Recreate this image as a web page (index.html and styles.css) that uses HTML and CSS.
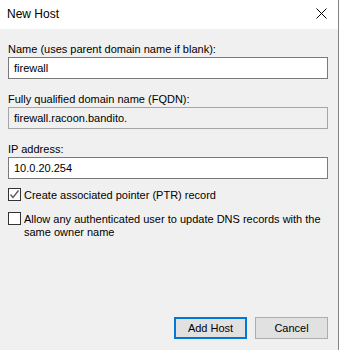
FILE: index.html
```html
<!DOCTYPE html>
<html>
<head>
<meta charset="utf-8">
<link rel="stylesheet" href="styles.css">
</head>
<body>
<div class="window">
  <div class="titlebar">
    <span class="title">New Host</span>
    <svg class="close" width="11" height="11" viewBox="0 0 11 11"><path d="M0.5 0.5L10.5 10.5M10.5 0.5L0.5 10.5" stroke="#000" stroke-width="1" fill="none"/></svg>
  </div>
  <div class="content">
    <div class="field">
      <div class="label">Name (uses parent domain name if blank):</div>
      <div class="textbox">firewall</div>
    </div>
    <div class="field">
      <div class="label">Fully qualified domain name (FQDN):</div>
      <div class="textbox readonly">firewall.racoon.bandito.</div>
    </div>
    <div class="field">
      <div class="label">IP address:</div>
      <div class="textbox">10.0.20.254</div>
    </div>
    <div class="check first">
      <span class="box checked"><svg width="11" height="11" viewBox="0 0 11 11"><path d="M1.5 5.5L4 8.5L9.5 1.5" stroke="#555" stroke-width="1.3" fill="none"/></svg></span>
      <span class="ctext">Create associated pointer (PTR) record</span>
    </div>
    <div class="check second">
      <span class="box"></span>
      <span class="ctext">Allow any authenticated user to update DNS records with the same owner name</span>
    </div>
    <div class="spacer"></div>
    <div class="buttons">
      <div class="btn default">Add Host</div>
      <div class="btn">Cancel</div>
    </div>
  </div>
</div>
</body>
</html>
```
FILE: styles.css
```css
html, body {
  margin: 0;
  padding: 0;
  background: #ffffff;
}
body {
  width: 340px;
  height: 350px;
  overflow: hidden;
  font-family: "Liberation Sans", Arial, sans-serif;
  font-size: 11px;
  color: #000;
}
.window {
  width: 338px;
  height: 350px;
  border-right: 1px solid #838383;
  background: #f0f0f0;
  display: flex;
  flex-direction: column;
}
.titlebar {
  height: 29px;
  background: #ffffff;
  display: flex;
  align-items: center;
  justify-content: space-between;
  padding: 0 11px 0 7px;
  box-sizing: border-box;
}
.title {
  font-size: 12px;
  margin-top: -1px;
}
.close {
  display: block;
  margin-top: -2px;
}
.content {
  flex: 1;
  display: flex;
  flex-direction: column;
  padding: 12px 10px 11px 8px;
}
.field {
  display: flex;
  flex-direction: column;
  margin-bottom: 12px;
}
.label {
  height: 16px;
  line-height: 16px;
}
.textbox {
  height: 22px;
  box-sizing: border-box;
  border: 1px solid #7a7a7a;
  background: #fff;
  padding-left: 5px;
  line-height: 20px;
}
.textbox.readonly {
  background: #f0f0f0;
  border-color: #a6a6a6;
}
.check {
  display: flex;
  align-items: flex-start;
  gap: 3px;
}
.check.first {
  margin-top: -3px;
}
.check.second {
  margin-top: 10px;
}
.box {
  flex: none;
  width: 13px;
  height: 13px;
  box-sizing: border-box;
  border: 1px solid #333;
  background: #fff;
  display: flex;
  align-items: center;
  justify-content: center;
}
.ctext {
  line-height: 13px;
  margin-top: 1px;
}
.spacer {
  flex: 1;
}
.buttons {
  display: flex;
  justify-content: flex-end;
  gap: 8px;
}
.btn {
  width: 73px;
  height: 22px;
  box-sizing: border-box;
  border: 1px solid #adadad;
  background: #e1e1e1;
  display: flex;
  align-items: center;
  justify-content: center;
}
.btn.default {
  border: 2px solid #0078d7;
}
```
